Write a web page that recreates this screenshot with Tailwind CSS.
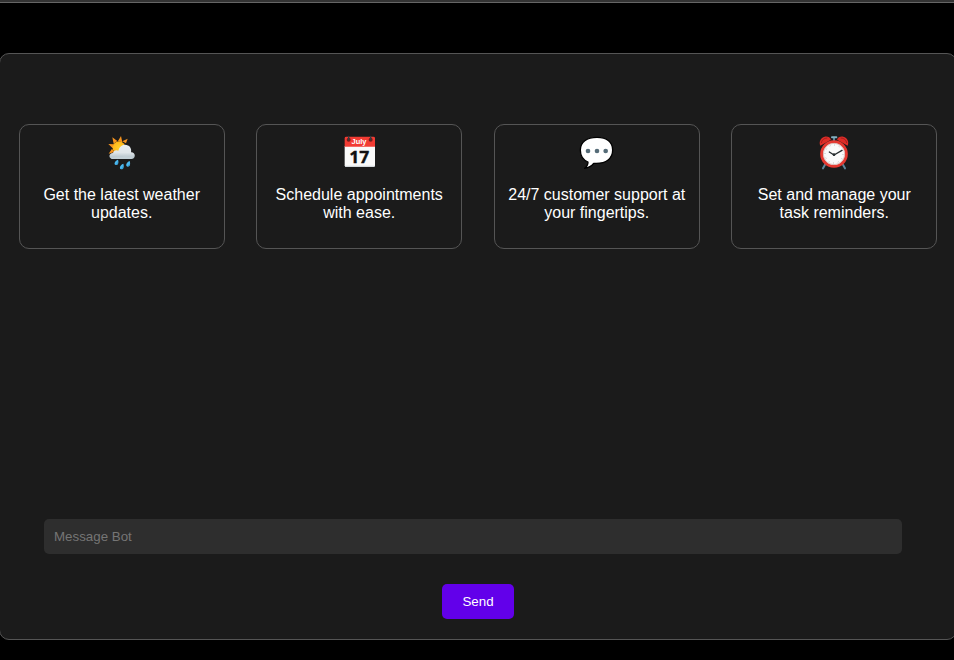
<!DOCTYPE html>
<html lang="en">
<head>
<meta charset="utf-8">
<title>Message Bot</title>
<script src="https://cdn.jsdelivr.net/npm/@tailwindcss/browser@4"></script>
</head>
<body class="h-[660px] overflow-hidden bg-black text-white font-['Liberation_Sans',Arial,sans-serif]">
<header class="h-[3px] border-b border-[#666] bg-[#333]"></header>
<main class="mt-[50px] -ml-px flex h-[587px] w-[958px] flex-col rounded-[10px] border border-[#555] bg-[#1b1b1b]">
  <section class="mt-[70px] ml-[18.7px] flex w-[918.6px] justify-between text-center text-base leading-[18px]">
    <article class="flex h-[125px] w-[206px] flex-col items-center rounded-[10px] border border-[#555] pt-[5px]">
      <svg class="size-11 shrink-0" viewBox="0 0 132 132">
        <defs>
          <linearGradient id="cloud" x1="0" y1="0" x2="0" y2="1"><stop offset="0" stop-color="#e8eef1"/><stop offset=".55" stop-color="#e0e6e9"/><stop offset="1" stop-color="#a9bac2"/></linearGradient>
          <radialGradient id="sun"><stop offset="0" stop-color="#ffd02c"/><stop offset="1" stop-color="#ffb518"/></radialGradient>
        </defs>
        <path fill="#f7941e" d="M63 18l4 19-13-4zM37 22l15 11-11 8zM25 42l18 1-5 12zM26 71l10-15 7 10zM83 26l-5 14-11-6z"/>
        <circle cx="57" cy="53" r="19" fill="url(#sun)"/>
        <path fill="url(#cloud)" d="M38 87c-13 0-13-18 1-18 1-7 10-11 16-7 3-11 10-18 20-18 13 0 21 11 18 23 14-1 16 20 1 20z"/>
        <path fill="#c2cfd5" d="M32 80c9 4 17 0 24 0 10 3 15-3 22-1 8 2 14 1 22 0-1 5-4 8-9 8H39c-4 0-7-3-7-7z"/>
        <path fill="#4bb8ee" d="M54 89c3 9 1 16-6 16-8-2-4-12 6-16zM70 101c3 9 1 17-6 17-8-2-4-13 6-17zM89 93c3 9 1 17-6 17-8-2-4-13 6-17z"/>
        <path fill="#2389c6" d="M53 94c1 7-1 10-6 10 4-2 5-5 6-10zM69 107c1 7-1 10-6 10 4-2 5-5 6-10zM88 99c1 7-1 10-6 10 4-2 5-5 6-10z"/>
      </svg>
      <p class="mt-3">Get the latest weather<br>updates.</p>
    </article>
    <article class="flex h-[125px] w-[206px] flex-col items-center rounded-[10px] border border-[#555] pt-[5px]">
      <svg class="size-11 shrink-0" viewBox="0 0 132 132">
        <path fill="#fafafa" d="M23 48h91v58q0 5-5 5H28q-5 0-5-5z"/>
        <path fill="#d5dadd" d="M23 107h91q-1 4-5 4H28q-4 0-5-4z"/>
        <path fill="#f23b33" d="M23 24q0-4 5-4h81q5 0 5 4v26H23z"/>
        <g fill="#721d1b"><circle cx="35" cy="29" r="6"/><circle cx="101" cy="29" r="6"/></g>
        <path d="M35 19v10M101 19v10" stroke="#333d42" stroke-width="4" stroke-linecap="round"/>
        <text x="66" y="43" text-anchor="middle" fill="#fff" font-family="Liberation Sans, sans-serif" font-size="23" font-weight="700" textLength="45" lengthAdjust="spacingAndGlyphs">July</text>
        <text x="67" y="100" text-anchor="middle" fill="#111" stroke="#111" stroke-width="1" font-family="Open Sans, sans-serif" font-size="49" font-weight="700" textLength="60" lengthAdjust="spacingAndGlyphs">17</text>
      </svg>
      <p class="mt-3">Schedule appointments<br>with ease.</p>
    </article>
    <article class="flex h-[125px] w-[206px] flex-col items-center rounded-[10px] border border-[#555] pt-[5px]">
      <svg class="size-11 shrink-0" viewBox="0 0 132 132">
        <path fill="#fff" stroke="#000" stroke-width="4" stroke-linejoin="round" d="M66 22c30 0 47 15 47 38 0 26-20 40-49 40h-8c-6 8-15 13-27 15 7-5 10-11 10-19-15-6-23-18-23-36 0-23 19-38 50-38z"/>
        <g fill="#566c78"><circle cx="39" cy="63" r="7"/><circle cx="66" cy="63" r="7"/><circle cx="92" cy="63" r="7"/></g>
      </svg>
      <p class="mt-3">24/7 customer support at<br>your fingertips.</p>
    </article>
    <article class="flex h-[125px] w-[206px] flex-col items-center rounded-[10px] border border-[#555] pt-[5px]">
      <svg class="size-11 shrink-0" viewBox="0 0 132 132">
        <path d="M39 104l-6 11M93 104l6 11M66 23v12" stroke="#5f8599" stroke-width="6" stroke-linecap="round"/>
        <path d="M60 22h13" stroke="#82aebf" stroke-width="6" stroke-linecap="round"/>
        <path fill="#dc2d27" d="M25 47c-5-12 1-24 13-27 9-2 16 2 19 9zM107 47c5-12-1-24-13-27-9-2-16 2-19 9z"/>
        <path d="M28 39c1-9 8-15 18-15M104 39c-1-9-8-15-18-15" fill="none" stroke="#a91e1e" stroke-width="3"/>
        <circle cx="66" cy="72" r="37" fill="#fff" stroke="#e53931" stroke-width="9"/>
        <circle cx="66" cy="72" r="32" fill="#fafafa" stroke="#c8a9a4" stroke-width="2"/>
        <circle cx="66" cy="72" r="27" fill="none" stroke="#9b9b9b" stroke-width="3" stroke-dasharray="2 12.14"/>
        <path d="M52 66l14 9 24-14" fill="none" stroke="#252b2e" stroke-width="4" stroke-linecap="round" stroke-linejoin="round"/>
        <circle cx="66" cy="74" r="4" fill="#252b2e"/>
      </svg>
      <p class="mt-3">Set and manage your<br>task reminders.</p>
    </article>
  </section>
  <form class="mt-auto mb-5 flex flex-col">
    <input type="text" placeholder="Message Bot" class="ml-[44px] h-[35px] w-[858px] rounded-[5px] bg-[#2e2e2e] px-[10px] text-[13.333px] text-white placeholder:text-[#757575]">
    <button type="button" class="mt-[30px] h-[35px] w-[72px] self-center rounded-[5px] bg-[#6200ea] text-[13.333px] text-white">Send</button>
  </form>
</main>
</body>
</html>
